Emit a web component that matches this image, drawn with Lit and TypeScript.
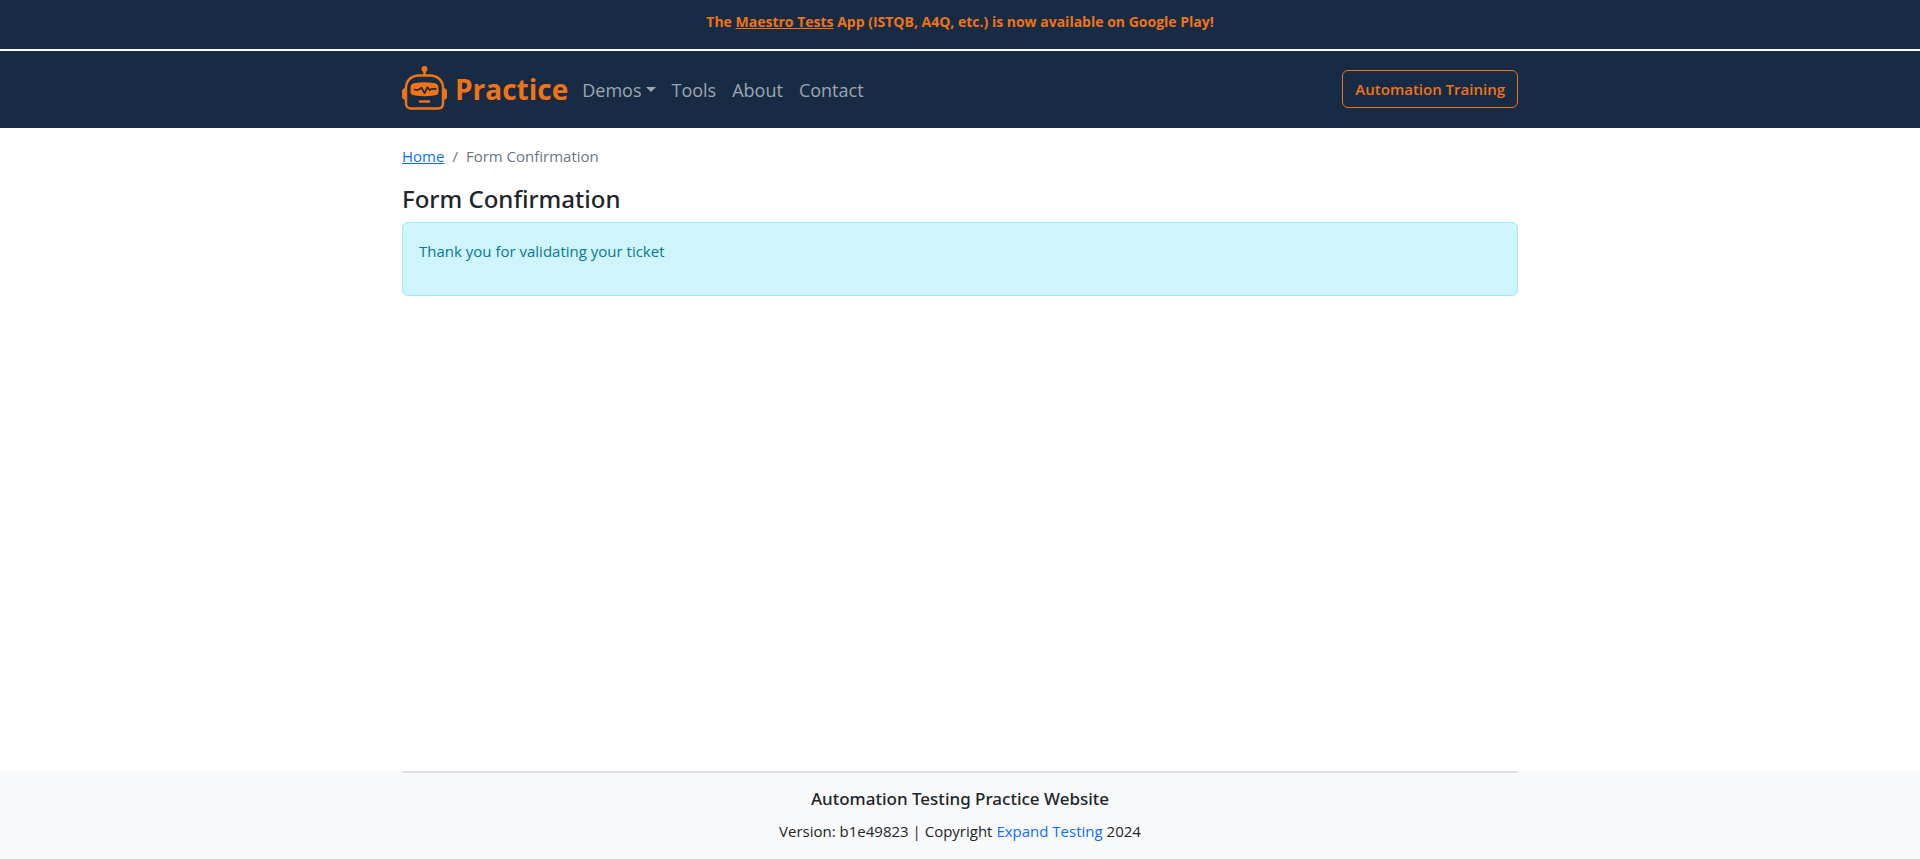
import { LitElement, html, css } from "lit";
import { customElement } from "lit/decorators.js";

@customElement("app-root")
export class AppRoot extends LitElement {
  static styles = css`
    :host {
      --navy: #182b45;
      --orange: #f07316;
      display: flex;
      flex-direction: column;
      min-height: 100vh;
      background: #fff;
      color: #212529;
      font-family: "Open Sans", "Noto Sans", sans-serif;
      font-size: 15px;
      font-weight: 400;
      line-height: 24px;
    }
    *, *::before, *::after { box-sizing: border-box; }
    h1, h2, p, ol, ul { margin: 0; padding: 0; }
    ol, ul { list-style: none; }
    .container { width: 100%; max-width: 1140px; margin: 0 auto; padding: 0 12px; }
    .banner {
      background: var(--navy);
      color: var(--orange);
      text-align: center;
      font-size: 14px;
      font-weight: 700;
      padding: 10px 12px 15px;
      border-bottom: 2px solid #fff;
    }
    .banner a { color: inherit; }
    .navbar { background: var(--navy); padding: 7px 0 9px; }
    .bar { display: flex; align-items: center; min-height: 61px; }
    .brand {
      display: flex;
      align-items: center;
      gap: 8px;
      margin-right: 14px;
      color: var(--orange);
      font-size: 28px;
      font-weight: 700;
      line-height: 44px;
      text-decoration: none;
    }
    .logo { width: 45px; height: 45px; }
    .nav { display: flex; flex: 1; gap: 16px; font-size: 18px; }
    .nav a, .nav button {
      display: flex;
      align-items: center;
      gap: 4px;
      padding: 2px 0 0;
      border: 0;
      background: none;
      color: #9ea5ae;
      font: inherit;
      text-decoration: none;
      cursor: pointer;
    }
    .caret { border: 5px solid transparent; border-top-color: currentColor; border-bottom: 0; }
    .training {
      border: 1px solid var(--orange);
      border-radius: 6px;
      padding: 6px 12px;
      background: none;
      color: var(--orange);
      font: inherit;
      font-weight: 600;
      line-height: 24px;
      cursor: pointer;
    }
    main { flex: 1; }
    .crumbs { display: flex; gap: 8px; padding: 16px 0; color: #6c757d; }
    .crumbs a { color: #0d6efd; }
    h1 { margin-bottom: 8px; font-family: "Noto Sans", sans-serif; font-size: 24px; font-weight: 500; line-height: 30px; }
    .alert {
      padding: 16px 16px 32px;
      border: 1px solid #9eeaf9;
      border-radius: 6px;
      background: #cff4fc;
      color: #087990;
    }
    footer { background: #f8f9fa; text-align: center; }
    .foot { padding: 14px 0 16px; border-top: 2px solid #dee2e6; }
    h2 { margin-bottom: 8px; font-family: "Noto Sans", sans-serif; font-size: 17px; font-weight: 500; line-height: 24px; }
    footer a { color: #0d6efd; text-decoration: none; }
  `;

  render() {
    return html`
      <div class="banner">
        The <a href="#">Maestro Tests</a> App (ISTQB, A4Q, etc.) is now available on Google Play!
      </div>
      <header class="navbar">
        <div class="container bar">
          <a class="brand" href="#">
            <svg class="logo" viewBox="0 0 45 45" fill="none" aria-hidden="true">
              <circle cx="22.500" cy="3" r="3" fill="#f07316" />
              <path d="M22.500 4v6" stroke="#f07316" stroke-width="2.600" />
              <path d="M4 22C4 14 10 9.500 17 9.500h11c7 0 13 4.500 13 12.500v15.500c0 3-2 5-5 5H9c-3 0-5-2-5-5z" stroke="#f07316" stroke-width="2.400" />
              <path d="M4 22v12c-2 0-4-1-4-3v-6c0-2 2-3 4-3zM41 22v12c2 0 4-1 4-3v-6c0-2-2-3-4-3z" fill="#f07316" />
              <path d="M13 17Q22.500 15.500 32 17Q36.500 17.500 36.500 22V26Q36.500 29 33 29.300Q22.500 31 12 29.300Q8.500 29 8.500 26V22Q8.500 17.500 13 17z" fill="#f07316" />
              <path d="M12 23.500q4 .800 6-.500l1.500-1.300 3 5.500 3-6 2.200 3 1.300-1q3-.500 5.500 0" stroke="#182b45" stroke-width="1.700" stroke-linejoin="round" />
              <path d="M18 35.500h9" stroke="#f07316" stroke-width="2.400" stroke-linecap="round" />
            </svg>
            Practice
          </a>
          <ul class="nav">
            <li><button type="button" aria-haspopup="true">Demos <span class="caret"></span></button></li>
            <li><a href="#">Tools</a></li>
            <li><a href="#">About</a></li>
            <li><a href="#">Contact</a></li>
          </ul>
          <button class="training" type="button">Automation Training</button>
        </div>
      </header>
      <main class="container">
        <nav aria-label="breadcrumb">
          <ol class="crumbs">
            <li><a href="#">Home</a></li>
            <li aria-hidden="true">/</li>
            <li aria-current="page">Form Confirmation</li>
          </ol>
        </nav>
        <h1>Form Confirmation</h1>
        <div class="alert" role="alert">Thank you for validating your ticket</div>
      </main>
      <footer>
        <div class="container">
          <div class="foot">
            <h2>Automation Testing Practice Website</h2>
            <p>Version: b1e49823 | Copyright <a href="#">Expand Testing</a> 2024</p>
          </div>
        </div>
      </footer>
    `;
  }
}
